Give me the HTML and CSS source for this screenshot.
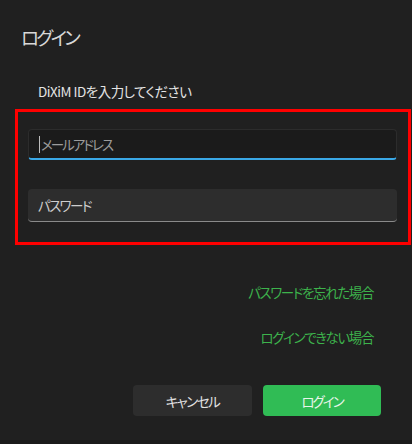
FILE: index.html
```html
<!DOCTYPE html>
<html lang="ja">
<head>
<meta charset="utf-8">
<link rel="stylesheet" href="styles.css">
</head>
<body>
<div class="dialog">
  <h1 class="title">ログイン</h1>
  <p class="subtitle">DiXiM IDを入力してください</p>
  <div class="highlight">
    <div class="field field-focus"><span class="caret"></span><span class="ph ph-dim">メールアドレス</span></div>
    <div class="field field-rest"><span class="ph">パスワード</span></div>
  </div>
  <div class="links">
    <a class="link">パスワードを忘れた場合</a>
    <a class="link">ログインできない場合</a>
  </div>
  <div class="buttons">
    <button class="btn btn-cancel">キャンセル</button>
    <button class="btn btn-login">ログイン</button>
  </div>
</div>
</body>
</html>
```
FILE: styles.css
```css
html, body {
  margin: 0;
  padding: 0;
  background: #202020;
}
body {
  width: 412px;
  height: 444px;
  overflow: hidden;
  font-family: "Noto Sans CJK JP", "Noto Sans", sans-serif;
  font-feature-settings: "palt";
}
.dialog {
  display: flex;
  flex-direction: column;
  height: 440px;
  border-bottom: 4px solid #1a1a1a;
}
.title {
  margin: 24px 0 0 21px;
  font-size: 18.5px;
  line-height: 26px;
  font-weight: 400;
  letter-spacing: -2.6px;
  color: #d8d8d8;
}
.subtitle {
  margin: 31px 0 0 38px;
  font-size: 13.5px;
  line-height: 20px;
  letter-spacing: -0.5px;
  color: #e4e4e4;
}
.highlight {
  margin: 8px 0 0 15px;
  width: 369px;
  height: 113px;
  border: 3px solid #ff0000;
  padding: 17px 11px 0 10px;
  display: flex;
  flex-direction: column;
  gap: 29px;
}
.field {
  height: 31px;
  border-radius: 4px;
  box-sizing: border-box;
  display: flex;
  align-items: center;
  padding-left: 10px;
  font-size: 13.5px;
}
.field-focus {
  background: #1b1b1b;
  border: 1px solid #2c2c2c;
  border-bottom: 2px solid #3aa8e6;
}
.field-rest {
  height: 33px;
  background: #2d2d2d;
  border-bottom: 1px solid #8a8a8a;
}
.caret {
  width: 1px;
  height: 17px;
  background: #bdbdbd;
  margin-right: 1px;
}
.ph {
  color: #cdcdcd;
  letter-spacing: -1.6px;
}
.ph-dim {
  color: #9c9c9c;
  letter-spacing: -2px;
}
.links {
  margin: 37px 39px 0 0;
  display: flex;
  flex-direction: column;
  align-items: flex-end;
  gap: 25px;
}
.link {
  font-size: 13.5px;
  line-height: 20px;
  letter-spacing: -1.4px;
  color: #3db34c;
}
.buttons {
  margin: 38px 31px 0 0;
  display: flex;
  justify-content: flex-end;
  gap: 11px;
}
.btn {
  height: 31px;
  border: none;
  border-radius: 4px;
  font-family: inherit;
  font-feature-settings: "palt";
  font-size: 13.5px;
  font-weight: 400;
  letter-spacing: -1.5px;
}
.btn-cancel {
  width: 119px;
  background: #2d2d2d;
  color: #e2e2e2;
}
.btn-login {
  width: 118px;
  background: #30bc55;
  color: #e8f5ea;
  letter-spacing: -2px;
}
```
